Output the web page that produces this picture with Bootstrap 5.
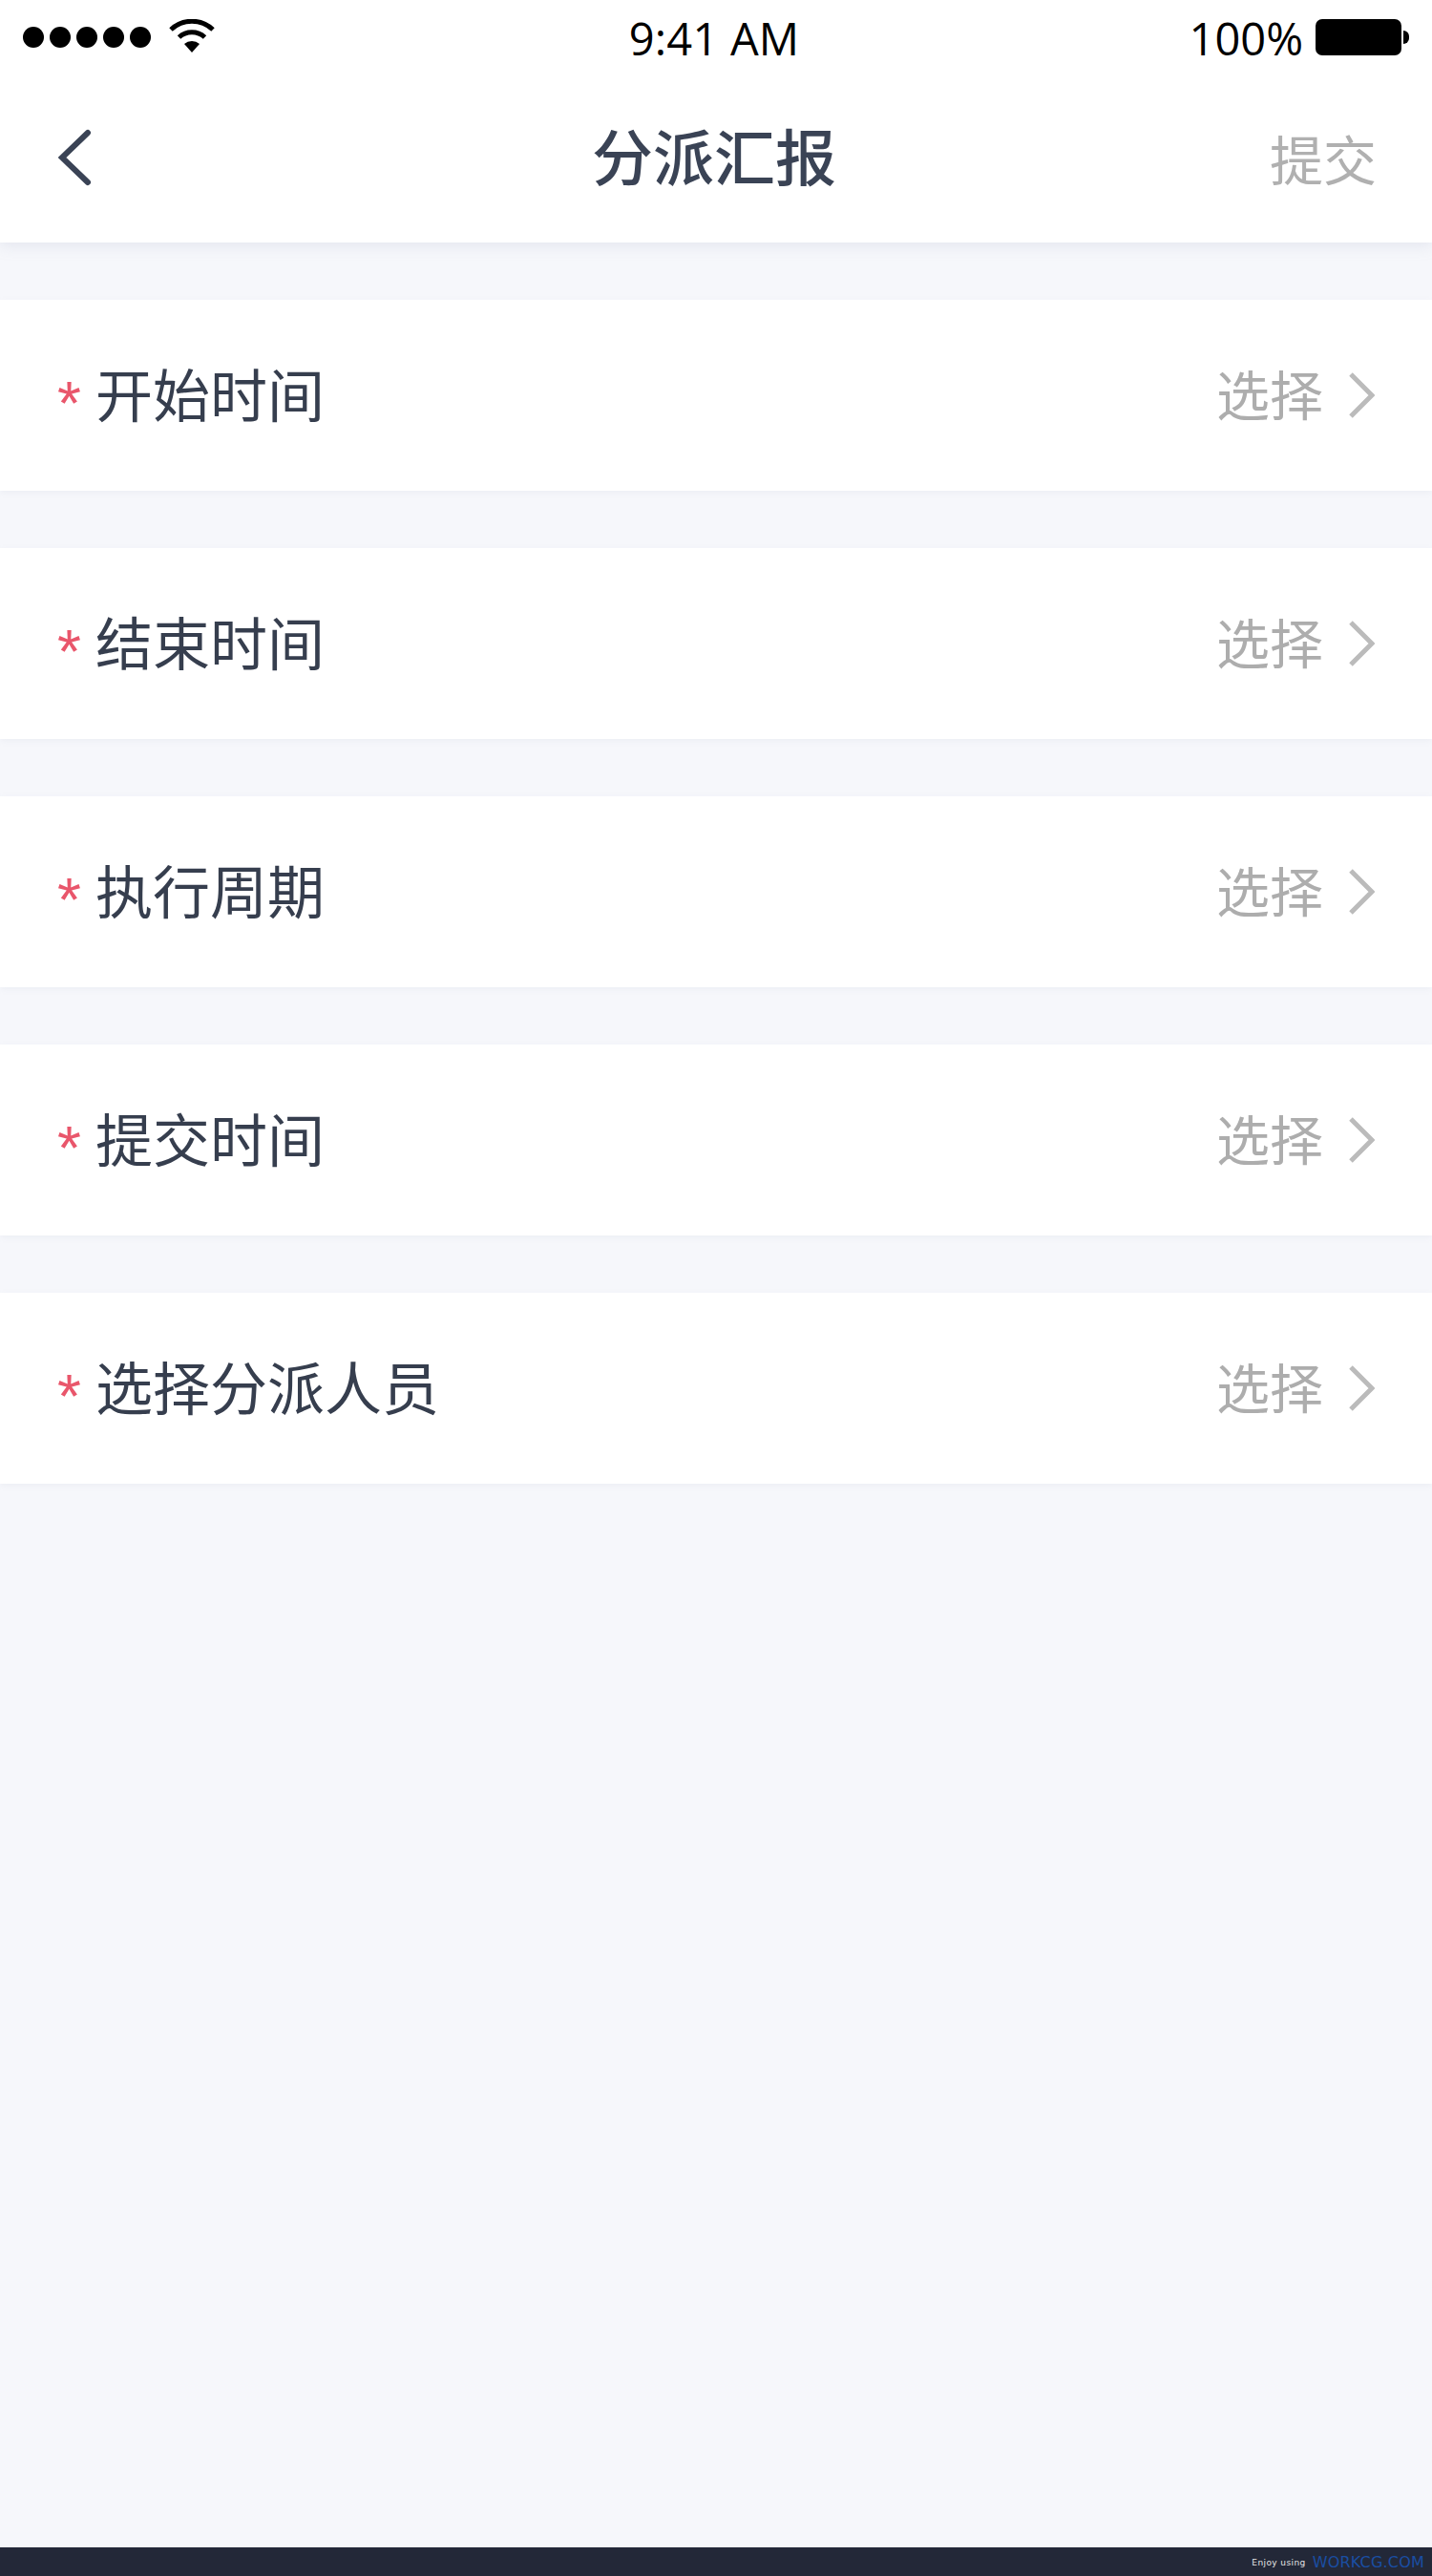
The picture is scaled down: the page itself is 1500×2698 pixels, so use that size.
<!DOCTYPE html>
<html lang="zh-CN">
<head>
  <meta charset="UTF-8">
  <title>分派汇报</title>
  <link href="https://cdn.jsdelivr.net/npm/bootstrap@5.3.0/dist/css/bootstrap.min.css" rel="stylesheet">
  <style>
    body { background: #f6f7fb; font-family: "Liberation Sans", "Noto Sans CJK SC", sans-serif; }
    .app-page { min-height: 2698px; }
    .top-wrap { background: #fff; box-shadow: 0 2px 16px rgba(150, 160, 185, .22); position: relative; z-index: 2; }
    .status-row { height: 80px; padding: 20px 24px 0; font-family: "Open Sans", sans-serif; font-weight: 400; color: #000; position: relative; }
    .sig-dot { width: 22px; height: 22px; background: #000; border-radius: 50%; }
    .sig-dots { gap: 6px; margin-top: 8px; }
    .wifi-icon { margin-left: 19px; }
    .clock-text { position: absolute; left: 0; right: 0; top: 10px; text-align: center; font-size: 47px; line-height: 60px; letter-spacing: .2px; padding-right: 4px; }
    .pct-text { font-size: 47px; line-height: 60px; margin-top: -10px; margin-right: 13px; }
    .batt-body { width: 90px; height: 38px; background: #000; border-radius: 7px; }
    .batt-nub { width: 6px; height: 14px; background: #000; border-radius: 0 7px 7px 0; margin: 12px 0 0 2px; }
    .title-bar { height: 174px; padding: 0 60px; position: relative; }
    .back-icon { margin-top: -5px; }
    .title-text { position: absolute; left: 0; right: 0; top: 50%; transform: translateY(-50%); text-align: center; font-size: 64px; font-weight: 500; color: #3a4355; line-height: 1; padding-right: 4px; }
    .submit-text { font-size: 56px; color: #b0b0b0; line-height: 1; margin-top: 6px; margin-right: -2px; position: relative; }
    .form-stack { padding-top: 60px; gap: 60px; }
    .form-line { height: 200px; background: #fff; padding: 0 60px; box-shadow: 0 2px 6px rgba(170, 178, 200, .12); }
    .req-mark { color: #e9566b; font-size: 64px; width: 40px; line-height: 1; margin-top: 18px; }
    .line-label { font-size: 60px; color: #363e4e; line-height: 1; margin-top: 6px; }
    .pick-text { font-size: 56px; color: #adadad; line-height: 1; margin-right: 26px; margin-top: 4px; }
    .foot-bar { height: 30px; background: #232838; padding-right: 8px; font-family: "DejaVu Sans", sans-serif; }
    .enjoy-text { font-size: 9px; color: #e6e6e6; margin-right: 7px; letter-spacing: .4px; padding-top: 4px; }
    .brand-text { font-size: 16px; color: #1a4ea3; letter-spacing: .2px; padding-top: 2px; }
  </style>
</head>
<body>
  <div class="app-page d-flex flex-column">
    <div class="top-wrap">
      <div class="status-row d-flex justify-content-between align-items-start">
        <div class="d-flex align-items-start">
          <div class="sig-dots d-flex">
            <div class="sig-dot"></div><div class="sig-dot"></div><div class="sig-dot"></div><div class="sig-dot"></div><div class="sig-dot"></div>
          </div>
          <svg class="wifi-icon" width="48" height="36" viewBox="0 0 48 36">
            <path d="M2 11 A32 32 0 0 1 46 11" fill="none" stroke="#000" stroke-width="5"/>
            <path d="M10.500 19 A20 20 0 0 1 37.500 19" fill="none" stroke="#000" stroke-width="5"/>
            <path d="M16 26 L24 35 L32 26 A12 12 0 0 0 16 26 Z" fill="#000"/>
          </svg>
        </div>
        <div class="clock-text">9:41 AM</div>
        <div class="d-flex align-items-start">
          <div class="pct-text">100%</div>
          <div class="batt-body"></div>
          <div class="batt-nub"></div>
        </div>
      </div>
      <div class="title-bar d-flex justify-content-between align-items-center">
        <svg class="back-icon" width="36" height="60" viewBox="0 0 36 60">
          <path d="M32 4 L5 30 L32 56" fill="none" stroke="#3a4355" stroke-width="6" stroke-linecap="round"/>
        </svg>
        <div class="title-text">分派汇报</div>
        <div class="submit-text">提交</div>
      </div>
    </div>

    <div class="form-stack d-flex flex-column">
      <div class="form-line d-flex align-items-center">
        <span class="req-mark">*</span><span class="line-label">开始时间</span>
        <span class="pick-text ms-auto">选择</span>
        <svg width="28" height="50" viewBox="0 0 28 50"><path d="M3 3 L25 25 L3 47" fill="none" stroke="#bbb" stroke-width="5"/></svg>
      </div>
      <div class="form-line d-flex align-items-center">
        <span class="req-mark">*</span><span class="line-label">结束时间</span>
        <span class="pick-text ms-auto">选择</span>
        <svg width="28" height="50" viewBox="0 0 28 50"><path d="M3 3 L25 25 L3 47" fill="none" stroke="#bbb" stroke-width="5"/></svg>
      </div>
      <div class="form-line d-flex align-items-center">
        <span class="req-mark">*</span><span class="line-label">执行周期</span>
        <span class="pick-text ms-auto">选择</span>
        <svg width="28" height="50" viewBox="0 0 28 50"><path d="M3 3 L25 25 L3 47" fill="none" stroke="#bbb" stroke-width="5"/></svg>
      </div>
      <div class="form-line d-flex align-items-center">
        <span class="req-mark">*</span><span class="line-label">提交时间</span>
        <span class="pick-text ms-auto">选择</span>
        <svg width="28" height="50" viewBox="0 0 28 50"><path d="M3 3 L25 25 L3 47" fill="none" stroke="#bbb" stroke-width="5"/></svg>
      </div>
      <div class="form-line d-flex align-items-center">
        <span class="req-mark">*</span><span class="line-label">选择分派人员</span>
        <span class="pick-text ms-auto">选择</span>
        <svg width="28" height="50" viewBox="0 0 28 50"><path d="M3 3 L25 25 L3 47" fill="none" stroke="#bbb" stroke-width="5"/></svg>
      </div>
    </div>

    <div class="foot-bar mt-auto d-flex justify-content-end align-items-center">
      <span class="enjoy-text">Enjoy using</span>
      <span class="brand-text">WORKCG.COM</span>
    </div>
  </div>
  <script src="https://cdn.jsdelivr.net/npm/bootstrap@5.3.0/dist/js/bootstrap.bundle.min.js"></script>
</body>
</html>
